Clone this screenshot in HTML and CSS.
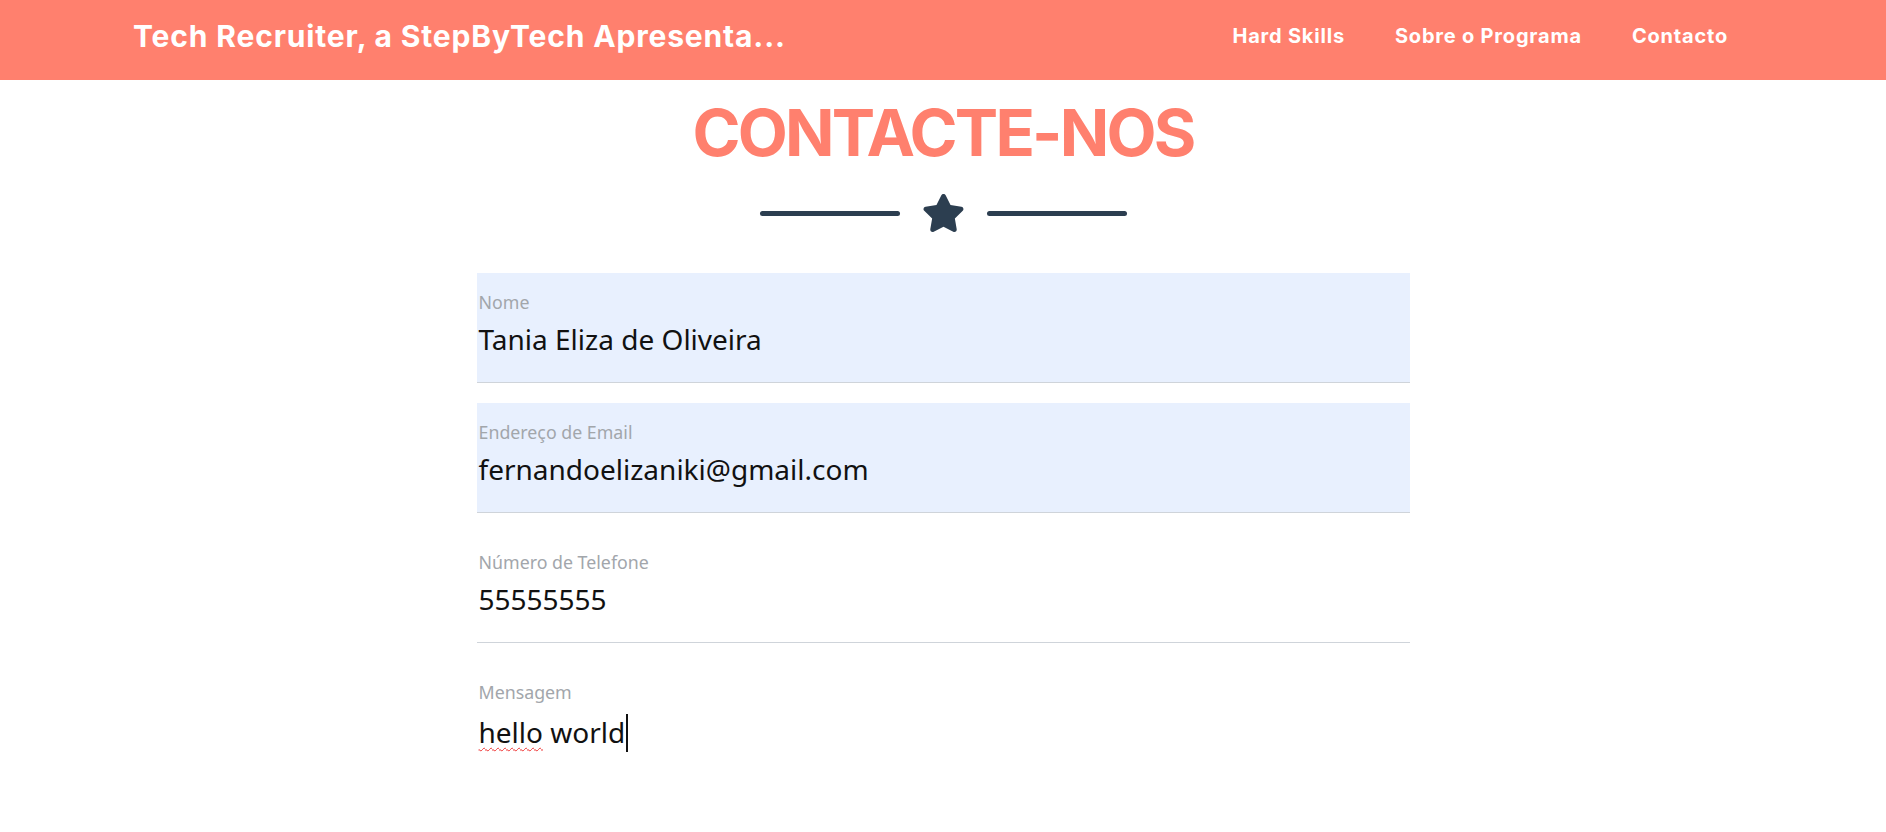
FILE: index.html
```html
<!DOCTYPE html>
<html lang="pt">
<head>
<meta charset="utf-8">
<title>Tech Recruiter - Contacto</title>
<link rel="stylesheet" href="styles.css">
</head>
<body>
<header class="navbar">
  <a class="brand" href="#">Tech Recruiter, a StepByTech Apresenta...</a>
  <nav class="nav">
    <a class="nav-link" href="#">Hard Skills</a>
    <a class="nav-link" href="#">Sobre o Programa</a>
    <a class="nav-link" href="#">Contacto</a>
  </nav>
</header>
<main class="section">
  <h2 class="section-heading">CONTACTE-NOS</h2>
  <div class="divider">
    <span class="divider-line"></span>
    <svg class="divider-star" viewBox="0 0 576 512" aria-hidden="true"><path d="M259.3 17.8L194 150.2 47.9 171.5c-26.2 3.8-36.7 36.1-17.7 54.6l105.7 103-25 145.5c-4.5 26.3 23.2 46 46.4 33.7L288 439.6l130.7 68.7c23.2 12.2 50.9-7.4 46.4-33.7l-25-145.5 105.7-103c19-18.5 8.5-50.8-17.7-54.6L382 150.2 316.7 17.8c-11.7-23.6-45.6-23.9-57.4 0z"/></svg>
    <span class="divider-line"></span>
  </div>
  <form class="contact-form">
    <div class="field autofilled">
      <label class="field-label">Nome</label>
      <div class="field-value">Tania Eliza de Oliveira</div>
    </div>
    <div class="field autofilled">
      <label class="field-label">Endereço de Email</label>
      <div class="field-value">fernandoelizaniki@gmail.com</div>
    </div>
    <div class="field">
      <label class="field-label">Número de Telefone</label>
      <div class="field-value">55555555</div>
    </div>
    <div class="field field-message">
      <label class="field-label">Mensagem</label>
      <div class="field-value"><span class="misspelled">hello</span> world<span class="caret"></span></div>
    </div>
  </form>
</main>
</body>
</html>
```
FILE: styles.css
```css
* { box-sizing: border-box; }
html, body { margin: 0; padding: 0; background: #fff; }
body { font-family: "Noto Sans", "Open Sans", sans-serif; color: #111; overflow: hidden; }

.navbar {
  height: 80px;
  background: #ff806e;
  display: flex;
  align-items: center;
  justify-content: space-between;
  padding: 0 158px 9px 133px;
}
.brand {
  font-family: Inter, "Liberation Sans", sans-serif;
  font-weight: 700;
  font-size: 30px;
  letter-spacing: 0.85px;
  color: #fff;
  text-decoration: none;
  white-space: nowrap;
}
.nav { display: flex; gap: 50px; }
.nav-link {
  font-family: Inter, "Liberation Sans", sans-serif;
  font-weight: 700;
  font-size: 20px;
  letter-spacing: 0.8px;
  color: #fff;
  text-decoration: none;
  white-space: nowrap;
}

.section { display: flex; flex-direction: column; align-items: center; }
.section-heading {
  margin: 14px 0 0;
  font-family: Inter, "Liberation Sans", sans-serif;
  font-weight: 700;
  font-size: 65px;
  line-height: 1.2;
  color: #ff806e;
  letter-spacing: -2.8px;
}
.divider {
  margin-top: 21px;
  height: 40px;
  display: flex;
  align-items: center;
  gap: 22px;
}
.divider-line {
  width: 140px;
  height: 5px;
  border-radius: 3px;
  background: #2c3e50;
}
.divider-star { width: 43px; height: 40px; fill: #2c3e50; }

.contact-form { width: 933px; margin-top: 40px; }
.field {
  height: 110px;
  margin-bottom: 20px;
  padding: 17px 0 0 2px;
  border-bottom: 1px solid #cfd4da;
}
.field.autofilled { background: #e8f0fe; }
.field-label {
  display: block;
  font-size: 17.8px;
  line-height: 24px;
  color: #a2a6ab;
}
.field-value {
  margin-top: 7px;
  font-size: 28px;
  line-height: 36px;
  color: #111;
  white-space: nowrap;
}
.field-message { height: 190px; }
.field-message .field-value { margin-top: 10px; }
.misspelled {
  text-decoration: underline wavy #e33;
  text-decoration-thickness: 1px;
  text-underline-offset: 4px;
}
.caret {
  display: inline-block;
  width: 2px;
  height: 38px;
  background: #111;
  vertical-align: -9px;
  margin-left: 1px;
}
```
